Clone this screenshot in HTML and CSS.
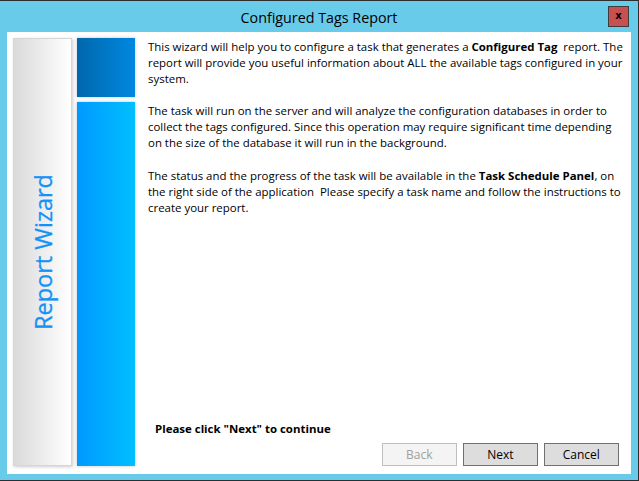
FILE: index.html
```html
<!DOCTYPE html>
<html>
<head>
<meta charset="utf-8">
<link rel="stylesheet" href="styles.css">
</head>
<body>
<div class="window">
  <div class="titlebar">
    <div class="title">Configured Tags Report</div>
    <div class="close">x</div>
  </div>
  <div class="client">
    <div class="side">
      <div class="banner"><span class="banner-text">Report Wizard</span></div>
      <div class="tiles">
        <div class="tile-dark"></div>
        <div class="tile-light"></div>
      </div>
    </div>
    <div class="main">
      <div class="text">
        <p>This wizard will help you to configure a task that generates a <b>Configured Tag</b>&nbsp; report. The<br>report will provide you useful information about ALL the available tags configured in your<br>system.</p>
        <p>The task will run on the server and will analyze the configuration databases in order to<br>collect the tags configured. Since this operation may require significant time depending<br>on the size of the database it will run in the background.</p>
        <p>The status and the progress of the task will be available in the <b>Task Schedule Panel</b>, on<br>the right side of the application&nbsp; Please specify a task name and follow the instructions to<br>create your report.</p>
      </div>
      <div class="hint">Please click "Next" to continue</div>
      <div class="buttons">
        <div class="btn disabled">Back</div>
        <div class="btn">Next</div>
        <div class="btn">Cancel</div>
      </div>
    </div>
  </div>
</div>
</body>
</html>
```
FILE: styles.css
```css
html, body {
  margin: 0;
  padding: 0;
  background: #6acbea;
}
.window {
  width: 638px;
  height: 479px;
  background: #69cbea;
  border-top: 1px solid #2e2e2e;
  border-right: 1px solid #2e2e2e;
  border-bottom: 1px solid #2e2e2e;
  font-family: "Open Sans", "Noto Sans", sans-serif;
  color: #000;
}
.titlebar {
  height: 31px;
  display: flex;
  align-items: center;
  justify-content: center;
  position: relative;
}
.title {
  font-size: 14.3px;
  margin-top: 1px;
}
.close {
  position: absolute;
  left: 608px;
  top: 5px;
  width: 19px;
  height: 19px;
  background: #c75050;
  border: 1px solid #3c3c3c;
  font-family: "DejaVu Sans", sans-serif;
  font-weight: bold;
  font-size: 10px;
  line-height: 17px;
  text-align: center;
}
.client {
  margin-left: 7px;
  width: 624px;
  height: 442px;
  background: #fff;
  display: flex;
  box-sizing: border-box;
  padding: 6px 0 8px 6px;
}
.side {
  display: flex;
  gap: 5px;
}
.banner {
  width: 59px;
  height: 428px;
  box-sizing: border-box;
  border: 1px solid #d6d6d6;
  background: linear-gradient(to right, #dadada, #ffffff);
  box-shadow: 1px 1px 3px rgba(0,0,0,0.2);
  display: flex;
  align-items: center;
  justify-content: center;
}
.banner-text {
  writing-mode: vertical-rl;
  transform: rotate(180deg);
  font-family: "Open Sans", sans-serif;
  font-size: 23.5px;
  color: #1592f5;
  white-space: nowrap;
  -webkit-text-stroke: 0.3px #1592f5;
}
.tiles {
  display: flex;
  flex-direction: column;
  gap: 5px;
}
.tile-dark {
  width: 58px;
  height: 59px;
  background: linear-gradient(to right, #0067ad, #0088e0);
  box-shadow: 0 0 3px rgba(0,0,0,0.25);
}
.tile-light {
  width: 58px;
  height: 364px;
  background: linear-gradient(to right, #0099ff, #00bfff);
  box-shadow: 0 0 3px rgba(0,0,0,0.25);
}
.main {
  flex: 1;
  display: flex;
  flex-direction: column;
  padding-left: 13px;
  padding-right: 9px;
}
.text {
  font-size: 11.45px;
  line-height: 16px;
  padding-top: 1px;
  flex: 1;
  white-space: nowrap;
}
.text p {
  margin: 0 0 16px 0;
}
.text p:last-child {
  margin-top: 17px;
}
.hint {
  font-weight: bold;
  font-size: 11.45px;
  line-height: 16px;
  padding-left: 7px;
  margin-bottom: 6px;
}
.buttons {
  display: flex;
  justify-content: flex-end;
  gap: 6px;
  padding-right: 4px;
}
.btn {
  width: 75px;
  height: 23px;
  box-sizing: border-box;
  border: 1px solid #707070;
  background: #dddddd;
  font-size: 12px;
  line-height: 21px;
  text-align: center;
}
.btn.disabled {
  border-color: #bfbfbf;
  background: #f4f4f4;
  color: #a0a0a0;
}
```
